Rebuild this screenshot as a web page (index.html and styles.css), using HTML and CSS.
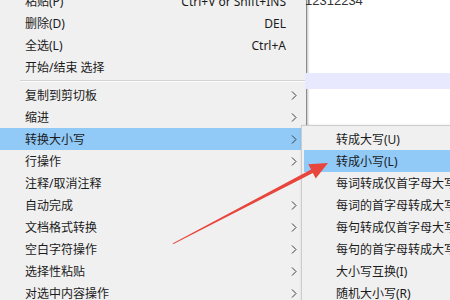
FILE: index.html
```html
<!DOCTYPE html>
<html lang="zh-CN">
<head>
    <meta charset="UTF-8">
    <title>转换大小写</title>
    <link rel="stylesheet" href="styles.css">
</head>
<body>
    <div class="screen">
        <div class="menu">
            <div class="item"><span class="label">粘贴(P)</span><span class="key">Ctrl+V or Shift+INS</span><span class="sub"></span></div>
            <div class="item"><span class="label">删除(D)</span><span class="key">DEL</span><span class="sub"></span></div>
            <div class="item"><span class="label">全选(L)</span><span class="key">Ctrl+A</span><span class="sub"></span></div>
            <div class="item"><span class="label">开始/结束 选择</span><span class="sub"></span></div>
            <div class="sep"></div>
            <div class="item"><span class="label">复制到剪切板</span><span class="sub"><svg width="6" height="9" viewBox="0 0 6 9"><polyline points="1,0.5 5,4.5 1,8.5"/></svg></span></div>
            <div class="item"><span class="label">缩进</span><span class="sub"><svg width="6" height="9" viewBox="0 0 6 9"><polyline points="1,0.5 5,4.5 1,8.5"/></svg></span></div>
            <div class="item active"><span class="label">转换大小写</span><span class="sub"><svg width="6" height="9" viewBox="0 0 6 9"><polyline points="1,0.5 5,4.5 1,8.5"/></svg></span></div>
            <div class="item"><span class="label">行操作</span><span class="sub"><svg width="6" height="9" viewBox="0 0 6 9"><polyline points="1,0.5 5,4.5 1,8.5"/></svg></span></div>
            <div class="item"><span class="label">注释/取消注释</span><span class="sub"></span></div>
            <div class="item"><span class="label">自动完成</span><span class="sub"><svg width="6" height="9" viewBox="0 0 6 9"><polyline points="1,0.5 5,4.5 1,8.5"/></svg></span></div>
            <div class="item"><span class="label">文档格式转换</span><span class="sub"><svg width="6" height="9" viewBox="0 0 6 9"><polyline points="1,0.5 5,4.5 1,8.5"/></svg></span></div>
            <div class="item"><span class="label">空白字符操作</span><span class="sub"><svg width="6" height="9" viewBox="0 0 6 9"><polyline points="1,0.5 5,4.5 1,8.5"/></svg></span></div>
            <div class="item"><span class="label">选择性粘贴</span><span class="sub"><svg width="6" height="9" viewBox="0 0 6 9"><polyline points="1,0.5 5,4.5 1,8.5"/></svg></span></div>
            <div class="item"><span class="label">对选中内容操作</span><span class="sub"><svg width="6" height="9" viewBox="0 0 6 9"><polyline points="1,0.5 5,4.5 1,8.5"/></svg></span></div>
        </div>
        <div class="editor">
            <div class="line">12312234</div>
            <div class="line"></div>
            <div class="line"></div>
            <div class="line"></div>
            <div class="line"></div>
            <div class="line current"></div>
        </div>

        <!-- 子菜单 -->
        <div class="submenu">
            <div class="item"><span class="label">转成大写(U)</span></div>
            <div class="item active"><span class="label">转成小写(L)</span></div>
            <div class="item"><span class="label">每词转成仅首字母大写</span></div>
            <div class="item"><span class="label">每词的首字母转成大写</span></div>
            <div class="item"><span class="label">每句转成仅首字母大写</span></div>
            <div class="item"><span class="label">每句的首字母转成大写</span></div>
            <div class="item"><span class="label">大小写互换(I)</span></div>
            <div class="item"><span class="label">随机大小写(R)</span></div>
        </div>

        <svg class="pointer" width="450" height="300" viewBox="0 0 450 300">
            <polygon points="172.5,243.5 311.1,169.5 308.3,164.2 328,163 315.7,178.4 312.9,173.1 173.5,244"/>
        </svg>
    </div>
</body>
</html>
```

FILE: styles.css
```css
body {
    margin: 0;
    font-family: "Noto Sans", "Noto Sans CJK SC", sans-serif;
    font-size: 12px;
    color: #1b1b1b;
}
.screen {
    width: 450px;
    height: 300px;
    overflow: hidden;
    position: relative;
    display: flex;
    background: #fff;
}
.menu {
    width: 306px;
    flex: none;
    margin-top: -10px;
    background: #f0f0f0;
    border-right: 1px solid #8c8c8c;
    box-shadow: 1px 0 2px rgba(0, 0, 0, 0.25);
}
.item {
    height: 22px;
    display: flex;
    align-items: center;
    padding-left: 25px;
    white-space: nowrap;
}
.item.active {
    background: #91c9f7;
}
.label {
    flex: 1;
}
.key {
    text-align: right;
}
.sub {
    width: 20px;
    display: flex;
    align-items: center;
    padding-left: 5px;
    box-sizing: border-box;
}
.sub polyline {
    fill: none;
    stroke: #3a3a3a;
    stroke-width: 1;
}
.sep {
    height: 6px;
    margin-left: 20px;
    box-sizing: border-box;
    padding-top: 2px;
}
.sep::before {
    content: "";
    display: block;
    border-top: 1px solid #d4d4d4;
    border-bottom: 1px solid #fbfbfb;
}
.editor {
    flex: 1;
    margin-top: -7px;
    margin-left: -2px;
}
.line {
    height: 16px;
    line-height: 16px;
    color: #333;
    font-family: "Liberation Sans", sans-serif;
    font-size: 13px;
}
.line.current {
    background: #e8e8ff;
}
.submenu {
    position: absolute;
    left: 301px;
    top: 125px;
    width: 200px;
    padding-top: 2px;
    background: #f0f0f0;
    border: 1px solid #cdcdcd;
    box-shadow: 1px 1px 3px rgba(0, 0, 0, 0.2);
}
.submenu .item {
    padding-left: 32px;
    margin-left: 2px;
}
.pointer {
    position: absolute;
    left: 0;
    top: 0;
}
.pointer polygon {
    fill: #e8453c;
}
```
